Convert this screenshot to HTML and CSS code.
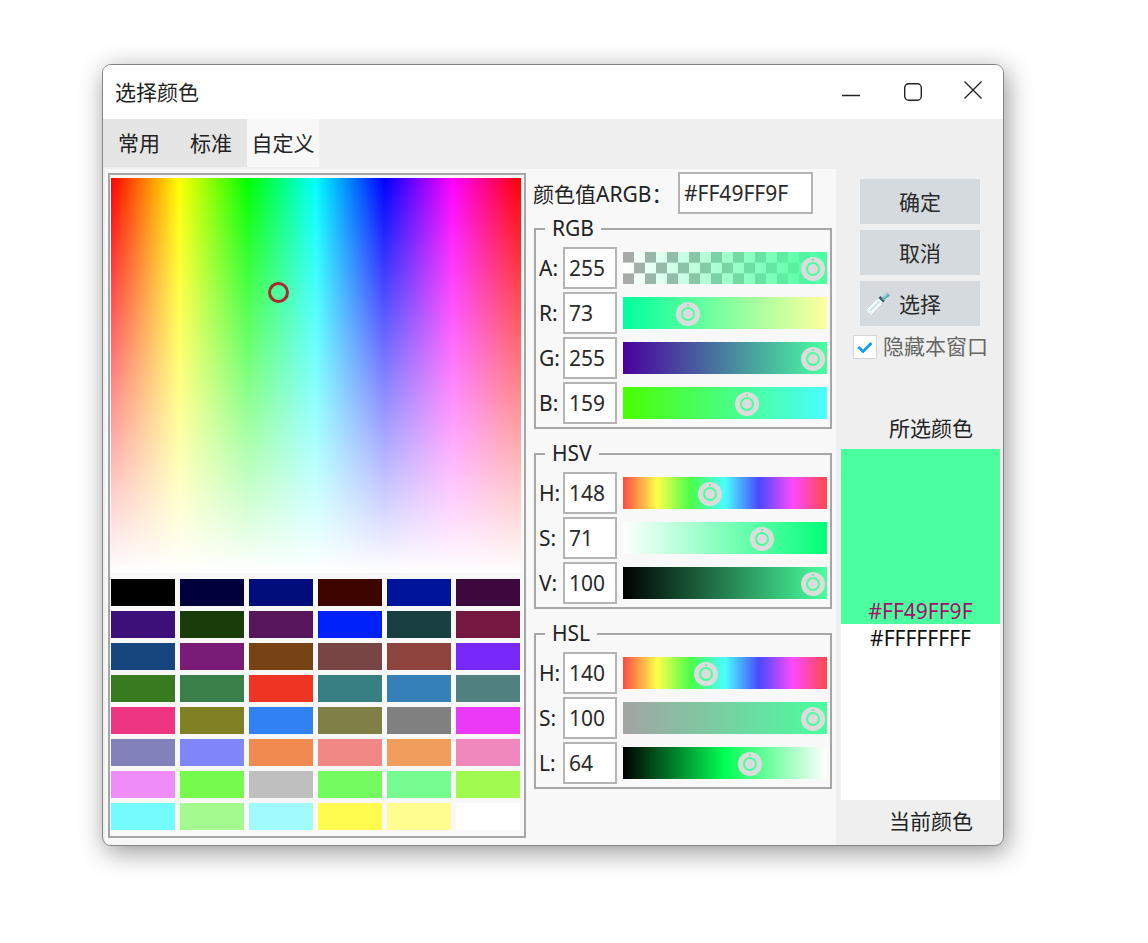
FILE: index.html
```html
<!DOCTYPE html>
<html lang="zh">
<head>
<meta charset="utf-8">
<title>选择颜色</title>
<link rel="stylesheet" href="styles.css">
</head>
<body>
<div class="window">
  <header class="titlebar">
    <span class="title">选择颜色</span>
    <svg class="wc wc-min" width="20" height="20" viewBox="0 0 20 20"><path d="M1 15.5h18" stroke="#222" stroke-width="1.4" fill="none"/></svg>
    <svg class="wc wc-max" width="20" height="20" viewBox="0 0 20 20"><rect x="1.7" y="1.7" width="16.6" height="16.6" rx="4" stroke="#222" stroke-width="1.4" fill="none"/></svg>
    <svg class="wc wc-close" width="20" height="20" viewBox="0 0 20 20"><path d="M1.5 1.5l17 17M18.5 1.5l-17 17" stroke="#222" stroke-width="1.3" fill="none"/></svg>
  </header>
  <nav class="tabs">
    <span class="tab">常用</span>
    <span class="tab">标准</span>
    <span class="tab active">自定义</span>
  </nav>
  <div class="content">
    <div class="main">
      <section class="picker-box">
        <div class="spectrum"><span class="marker"></span></div>
        <div class="swatches">
          <i style="background:#000000"></i><i style="background:#00003d"></i><i style="background:#000d7a"></i><i style="background:#3d0500"></i><i style="background:#001499"></i><i style="background:#3d083d"></i>
          <i style="background:#3d0f78"></i><i style="background:#183d0a"></i><i style="background:#57155c"></i><i style="background:#0021fa"></i><i style="background:#184042"></i><i style="background:#75183f"></i>
          <i style="background:#17457d"></i><i style="background:#781c78"></i><i style="background:#784314"></i><i style="background:#784545"></i><i style="background:#8f433d"></i><i style="background:#7829fa"></i>
          <i style="background:#387a1f"></i><i style="background:#3a7f4a"></i><i style="background:#ee3524"></i><i style="background:#387f82"></i><i style="background:#3680ba"></i><i style="background:#518080"></i>
          <i style="background:#ee3582"></i><i style="background:#808024"></i><i style="background:#3282f6"></i><i style="background:#808046"></i><i style="background:#808080"></i><i style="background:#ea3af7"></i>
          <i style="background:#8282ba"></i><i style="background:#8085f8"></i><i style="background:#f08a50"></i><i style="background:#f28885"></i><i style="background:#f19e5c"></i><i style="background:#f087bd"></i>
          <i style="background:#ee8cf8"></i><i style="background:#75fb4c"></i><i style="background:#bfbfbf"></i><i style="background:#74fb5f"></i><i style="background:#75fb8f"></i><i style="background:#a1fb4e"></i>
          <i style="background:#73fbfd"></i><i style="background:#a3fb8f"></i><i style="background:#a1fbfd"></i><i style="background:#fffb4f"></i><i style="background:#fffd8f"></i><i style="background:#ffffff"></i>
        </div>
      </section>
      <section class="values">
        <div class="argb-row">
          <span class="argb-label">颜色值ARGB：</span>
          <span class="field field-hex">#FF49FF9F</span>
        </div>
        <fieldset class="group group-rgb">
          <legend>RGB</legend>
          <div class="row"><label>A:</label><span class="field">255</span><div class="slider s-a"><b class="thumb" style="left:190px"></b></div></div>
          <div class="row"><label>R:</label><span class="field">73</span><div class="slider s-r"><b class="thumb" style="left:65px"></b></div></div>
          <div class="row"><label>G:</label><span class="field">255</span><div class="slider s-g"><b class="thumb" style="left:190px"></b></div></div>
          <div class="row"><label>B:</label><span class="field">159</span><div class="slider s-b"><b class="thumb" style="left:124px"></b></div></div>
        </fieldset>
        <fieldset class="group group-hsv">
          <legend>HSV</legend>
          <div class="row"><label>H:</label><span class="field">148</span><div class="slider s-h"><b class="thumb" style="left:87px"></b></div></div>
          <div class="row"><label>S:</label><span class="field">71</span><div class="slider s-vs"><b class="thumb" style="left:139px"></b></div></div>
          <div class="row"><label>V:</label><span class="field">100</span><div class="slider s-v"><b class="thumb" style="left:190px"></b></div></div>
        </fieldset>
        <fieldset class="group group-hsl">
          <legend>HSL</legend>
          <div class="row"><label>H:</label><span class="field">140</span><div class="slider s-h"><b class="thumb" style="left:83px"></b></div></div>
          <div class="row"><label>S:</label><span class="field">100</span><div class="slider s-ls"><b class="thumb" style="left:190px"></b></div></div>
          <div class="row"><label>L:</label><span class="field">64</span><div class="slider s-l"><b class="thumb" style="left:127px"></b></div></div>
        </fieldset>
      </section>
    </div>
    <aside class="side">
      <button class="btn">确定</button>
      <button class="btn">取消</button>
      <button class="btn btn-pick">
        <svg class="dropper" width="26" height="26" viewBox="0 0 26 26">
          <path d="M2 24L3 19L14 8L18 12L7 23Z" fill="#f4f9fb" stroke="#c9dbe4" stroke-width="1"/>
          <path d="M1 21L12 10M5 25L16 14" stroke="#ffffff" stroke-width="1"/>
          <path d="M5 21L14.5 11.5" stroke="#c3dbe6" stroke-width="1.6"/>
          <path d="M14.5 7L19 11.5" stroke="#3d5b66" stroke-width="2.6"/>
          <path d="M16.5 8.5L22 2.5L25 5.5L18.5 10.5Z" fill="#62aebc"/>
          <path d="M18.5 7.5L22.5 3.5" stroke="#a8dce2" stroke-width="1.2"/>
        </svg>
        <span>选择</span>
      </button>
      <label class="check">
        <span class="box"><svg width="16" height="12" viewBox="0 0 16 12"><path d="M1.5 6l4.5 4.5 8.5-8.5" stroke="#1a9bf0" stroke-width="2.8" fill="none"/></svg></span>
        <span class="check-text">隐藏本窗口</span>
      </label>
      <div class="cap cap-selected">所选颜色</div>
      <div class="preview">
        <div class="pv-new"><span>#FF49FF9F</span></div>
        <div class="pv-cur"><span>#FFFFFFFF</span></div>
      </div>
      <div class="cap cap-current">当前颜色</div>
    </aside>
  </div>
</div>
</body>
</html>
```

FILE: styles.css
```css
*, *::before, *::after { box-sizing: border-box; }
html, body { margin: 0; padding: 0; background: #fff; }
body {
  height: 943px;
  padding: 64px 0 0 102px;
  font-family: "Noto Sans", "Noto Sans CJK SC", sans-serif;
  font-size: 21px;
  color: #222;
  overflow: hidden;
}
.window {
  width: 902px;
  height: 782px;
  background: #efefef;
  border: 1px solid #858585;
  border-radius: 9px;
  box-shadow: 3px 6px 26px rgba(0,0,0,.42);
  overflow: hidden;
  display: flex;
  flex-direction: column;
}
.titlebar {
  height: 54px;
  flex: none;
  background: #fff;
  position: relative;
  display: flex;
  align-items: center;
  padding-left: 12px;
}
.title { line-height: 54px; }
.wc { position: absolute; }
.wc-min { left: 738px; top: 15px; }
.wc-max { left: 800px; top: 17px; }
.wc-close { left: 860px; top: 15px; }
.tabs {
  height: 48px;
  flex: none;
  display: flex;
}
.tab {
  width: 72px;
  height: 48px;
  background: #e5e5e5;
  line-height: 48px;
  text-align: center;
}
.tab.active { background: #f8f8f8; }
.content {
  flex: 1;
  display: flex;
  padding-top: 2px;
  min-height: 0;
}
.main {
  width: 731px;
  flex: none;
  margin-left: 2px;
  background: #f8f8f8;
  display: flex;
  padding: 4px 0 0 3px;
}
.picker-box {
  width: 418px;
  height: 665px;
  border: 2px solid #a6a6a6;
  padding: 3px 0 0 1px;
  flex: none;
}
.spectrum {
  width: 410px;
  height: 395px;
  position: relative;
  background:
    linear-gradient(to bottom, rgba(255,255,255,0), #fff),
    linear-gradient(to right, #f00, #ff0 16.67%, #0f0 33.33%, #0ff 50%, #00f 66.67%, #f0f 83.33%, #f00);
}
.marker {
  position: absolute;
  left: 157px;
  top: 103.5px;
  width: 21px;
  height: 21px;
  border: 3px solid #a92a2f;
  border-radius: 50%;
}
.swatches {
  margin-top: 6px;
  display: grid;
  grid-template-columns: repeat(6, 64px);
  grid-auto-rows: 27px;
  column-gap: 5px;
  row-gap: 5px;
}
.swatches i { display: block; }
.values {
  width: 299px;
  margin-left: 7px;
  flex: none;
}
.argb-row {
  display: flex;
  align-items: center;
  height: 42px;
  margin-top: -1px;
}
.argb-label { width: 145px; flex: none; white-space: nowrap; }
.field {
  display: block;
  width: 54px;
  height: 42px;
  flex: none;
  background: #fff;
  border: 2px solid #b4b4b4;
  line-height: 38px;
  padding-left: 4px;
  color: #2a2a2a;
}
.field-hex { width: 135px; }
.group {
  margin: 14px 0 0 1px;
  padding: 0;
  width: 298px;
  border: 2px solid #a6a6a6;
  min-inline-size: 0;
}
.group legend {
  padding: 0 7px;
  margin-left: 9px;
  height: 22px;
  line-height: 20px;
}
.group-rgb { height: 211px; margin-top: 4px; }
.group-hsv { height: 166px; }
.group-hsl { height: 166px; }
.row {
  display: flex;
  align-items: center;
  height: 42px;
  margin-bottom: 3px;
  padding-left: 27px;
  position: relative;
}
.group .row:first-of-type { margin-top: 7px; }
.row label {
  position: absolute;
  left: 3px;
  line-height: 42px;
  white-space: nowrap;
}
.slider {
  width: 204px;
  height: 32px;
  margin-left: 6px;
  position: relative;
  flex: none;
}
.thumb {
  position: absolute;
  top: 5px;
  width: 24px;
  height: 24px;
  margin-left: -12px;
  background: #dcdcdc;
  border-radius: 50%;
}
.thumb::before {
  content: "";
  position: absolute;
  left: 5px;
  top: 5px;
  width: 14px;
  height: 14px;
  border: 2px solid #49ff9f;
  border-radius: 50%;
}
.thumb::after {
  content: "";
  position: absolute;
  left: 11px;
  top: 2px;
  width: 2px;
  height: 2px;
  background: #7fe8ae;
}
.s-a {
  background:
    linear-gradient(to right, rgba(73,255,159,0), #49ff9f),
    repeating-conic-gradient(#fff 0 25%, #a9a9a9 0 50%) 0 0 / 22px 21.34px;
}
.s-r { background: linear-gradient(to right, #00ff9f, #ffff9f); }
.s-g { background: linear-gradient(to right, #49009f, #49ff9f); }
.s-b { background: linear-gradient(to right, #49ff00, #49ffff); }
.s-h { background: linear-gradient(to right, #ff4949, #ffff49 16.67%, #49ff49 33.33%, #49ffff 50%, #4949ff 66.67%, #ff49ff 83.33%, #ff4949); }
.s-vs { background: linear-gradient(to right, #fff, #00ff77); }
.s-v { background: linear-gradient(to right, #000, #49ff9f); }
.s-ls { background: linear-gradient(to right, #a3a3a3, #49ff9f); }
.s-l { background: linear-gradient(to right, #000, #00ff55 50%, #fff); }
.side {
  flex: 1;
  padding: 10px 0 0 24px;
  display: flex;
  flex-direction: column;
  align-items: flex-start;
}
.btn {
  width: 120px;
  height: 45px;
  flex: none;
  margin: 0 0 6px;
  padding: 0 0 2px;
  border: 0;
  background: #d5dadf;
  font: inherit;
  color: #2a2a2a;
  display: flex;
  align-items: center;
  justify-content: center;
}
.btn-pick {
  justify-content: flex-start;
  gap: 8px;
  padding-left: 5px;
  margin-bottom: 9px;
}
.check {
  display: flex;
  align-items: center;
  margin-left: -7px;
  height: 24px;
  white-space: nowrap;
}
.box {
  width: 24px;
  height: 24px;
  background: #fff;
  border: 1px solid #d5d5d5;
  display: flex;
  align-items: center;
  justify-content: center;
}
.check-text { margin-left: 6px; color: #666; line-height: 22px; padding-bottom: 2px; }
.cap {
  margin-left: -24px;
  width: 166px;
  padding-left: 24px;
  height: 28px;
  line-height: 26px;
  text-align: center;
}
.cap-selected { margin-top: 56px; }
.preview {
  margin: 6px 0 0 -19px;
  width: 159px;
  height: 351px;
  flex: none;
  display: flex;
  flex-direction: column;
}
.pv-new {
  height: 175px;
  background: #4bffa0;
  display: flex;
  align-items: flex-end;
  justify-content: center;
  color: #a80f6c;
  line-height: 26px;
}
.pv-cur {
  flex: 1;
  background: #fff;
  display: flex;
  justify-content: center;
  line-height: 28px;
  color: #111;
}
.cap-current { margin-top: 8px; }
```
